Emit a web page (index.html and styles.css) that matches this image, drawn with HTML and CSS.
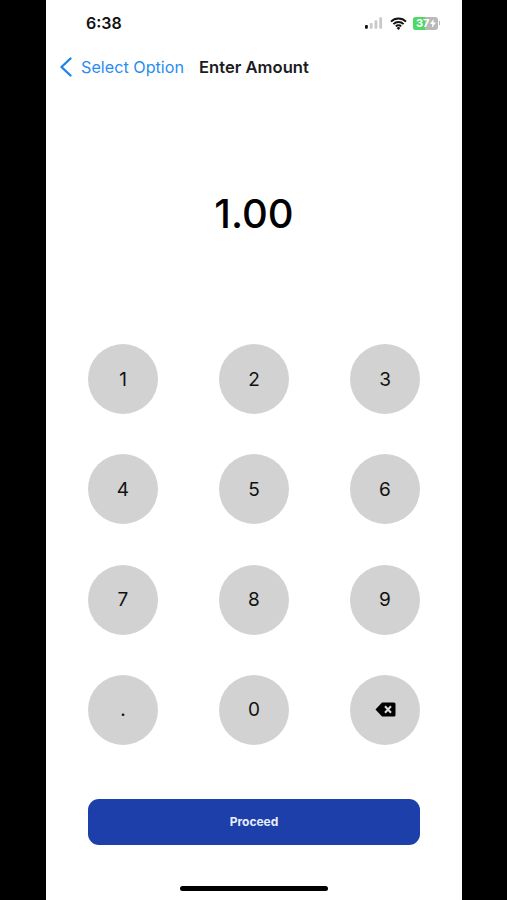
FILE: index.html
```html
<!DOCTYPE html>
<html lang="en">

<head>
    <meta charset="UTF-8">
    <title>Enter Amount</title>
    <link rel="stylesheet" href="styles.css">
</head>

<body>
    <div class="screen">
        <div class="status-bar">
            <span class="time">6:38</span>
            <div class="status-icons">
                <svg class="signal" width="19" height="12" viewBox="0 0 20 12">
                    <rect x="0" y="8" width="3" height="4" rx="1" fill="#111" />
                    <rect x="5" y="6" width="3" height="6" rx="1" fill="#c9c9c9" />
                    <rect x="10" y="3" width="3" height="9" rx="1" fill="#c9c9c9" />
                    <rect x="15" y="0" width="3" height="12" rx="1" fill="#c9c9c9" />
                </svg>
                <svg class="wifi" width="17" height="13" viewBox="0 0 17 13">
                    <path d="M1 4.6a10.6 10.6 0 0 1 15 0M3.4 7.1a7.2 7.2 0 0 1 10.2 0M5.8 9.4a3.8 3.8 0 0 1 5.4 0" fill="none" stroke="#111" stroke-width="1.9" />
                    <path d="M8.5 13l-1.9-2.1a2.7 2.7 0 0 1 3.8 0z" fill="#111" />
                </svg>
                <div class="battery">
                    <div class="battery-fill"></div>
                    <span class="battery-text">37</span>
                    <svg class="bolt" width="6" height="9" viewBox="0 0 6 9">
                        <path d="M3.6 0L0 5h2.4L1.8 9 6 3.6H3.4z" fill="#fff" />
                    </svg>
                </div>
                <div class="battery-cap"></div>
            </div>
        </div>

        <div class="nav-bar">
            <svg class="back-icon" width="14" height="20" viewBox="0 0 14 20">
                <path d="M11.5 1.5L2.5 10l9 8.5" fill="none" stroke="#1f84ea" stroke-width="2.4" stroke-linecap="round" stroke-linejoin="round" />
            </svg>
            <span class="back-label">Select Option</span>
            <span class="nav-title">Enter Amount</span>
        </div>

        <div class="amount">1.00</div>

        <div class="keypad">
            <button class="key">1</button>
            <button class="key">2</button>
            <button class="key">3</button>
            <button class="key">4</button>
            <button class="key">5</button>
            <button class="key">6</button>
            <button class="key">7</button>
            <button class="key">8</button>
            <button class="key">9</button>
            <button class="key">.</button>
            <button class="key">0</button>
            <button class="key" aria-label="Delete">
                <svg width="21" height="15" viewBox="0 0 21 15">
                    <path d="M7 0.5H19a1.5 1.5 0 0 1 1.5 1.5V13a1.5 1.5 0 0 1-1.5 1.5H7L0.5 7.5z" fill="#000" />
                    <path d="M10 4.3l6 6.4M16 4.3l-6 6.4" stroke="#ddd" stroke-width="2" fill="none" />
                </svg>
            </button>
        </div>

        <button class="proceed">Proceed</button>

        <div class="home-indicator"></div>
    </div>
</body>

</html>
```

FILE: styles.css
```css
html,
body {
    margin: 0;
    padding: 0;
    height: 900px;
    overflow: hidden;
    background-color: #000;
    font-family: "Inter", "Liberation Sans", sans-serif;
}

* {
    box-sizing: border-box;
}

.screen {
    display: flex;
    flex-direction: column;
    width: 416px;
    height: 900px;
    margin-left: 46px;
    background-color: #fff;
}

/* STATUS BAR */
.status-bar {
    display: flex;
    align-items: center;
    justify-content: space-between;
    height: 18px;
    margin-top: 14px;
    padding-left: 40px;
    padding-right: 22px;
}

.time {
    font-size: 16px;
    font-weight: 600;
    color: #111;
}

.status-icons {
    display: flex;
    align-items: center;
}

.wifi {
    margin-left: 6px;
    margin-right: 6px;
}

.battery {
    display: flex;
    align-items: center;
    position: relative;
    width: 25px;
    height: 13px;
    border-radius: 3px;
    overflow: hidden;
    background-color: #b9b9b9;
}

.battery-fill {
    position: absolute;
    left: 0;
    top: 0;
    bottom: 0;
    width: 12px;
    background-color: #4cd964;
}

.battery-text {
    position: relative;
    padding-left: 3px;
    font-size: 11px;
    font-weight: 700;
    color: #fff;
}

.bolt {
    position: relative;
    margin-left: 0;
}

.battery-cap {
    width: 1px;
    height: 4px;
    margin-left: 1px;
    background-color: #b9b9b9;
}

/* NAV BAR */
.nav-bar {
    display: flex;
    align-items: center;
    height: 22px;
    margin-top: 24px;
    padding-left: 13px;
}

.back-label {
    margin-left: 8px;
    font-size: 16.2px;
    color: #2a8cee;
}

.nav-title {
    margin-left: 15px;
    font-size: 16.6px;
    font-weight: 600;
    color: #1c1c1e;
}

/* AMOUNT */
.amount {
    height: 50px;
    margin-top: 111px;
    text-align: center;
    font-size: 40px;
    font-weight: 500;
    line-height: 50px;
    color: #000;
}

/* KEYPAD */
.keypad {
    display: grid;
    grid-template-columns: repeat(3, 70px);
    justify-content: space-between;
    row-gap: 40.3px;
    width: 332px;
    margin-top: 105px;
    margin-left: 42px;
}

.key {
    display: flex;
    align-items: center;
    justify-content: center;
    width: 70px;
    height: 70px;
    padding: 0;
    border: 0;
    border-radius: 50%;
    background-color: #d2d2d2;
    font-family: inherit;
    font-size: 19px;
    color: #111;
}

.proceed {
    width: 332px;
    height: 46px;
    margin-top: 54px;
    margin-left: 42px;
    border: 0;
    border-radius: 11px;
    background-color: #1c3faa;
    font-family: inherit;
    font-size: 12px;
    font-weight: 700;
    color: #e8edfa;
}

.home-indicator {
    width: 148px;
    height: 5px;
    margin-top: 41px;
    margin-left: 134px;
    border-radius: 3px;
    background-color: #000;
}
```
